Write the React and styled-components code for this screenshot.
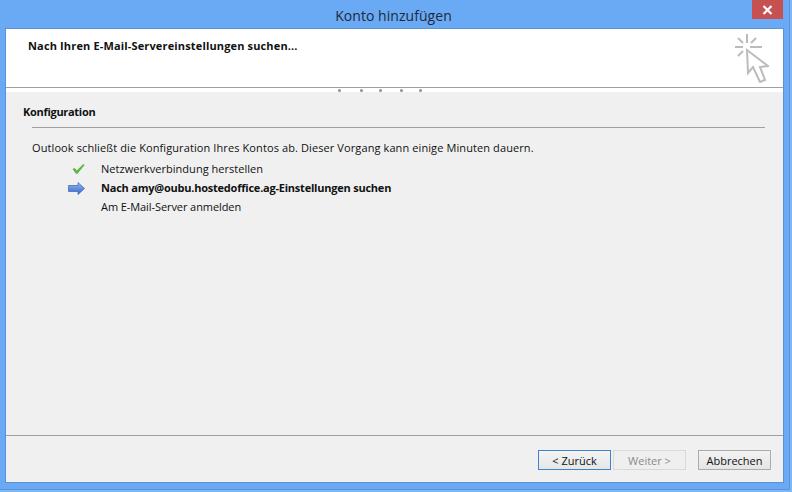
import React from 'react';
import styled, { createGlobalStyle } from 'styled-components';

const FONT = `"Open Sans", "Noto Sans", "Liberation Sans", sans-serif`;

const GlobalStyle = createGlobalStyle`
  html, body {
    margin: 0;
    padding: 0;
    background: #6aa9f4;
  }
  * {
    box-sizing: border-box;
  }
`;

const DOTS = [338, 360, 379, 400, 419];

export default function App() {
  return (
    <Screen>
      <GlobalStyle />
      <WindowFrame>
        <TitleBar>
          <Title>Konto hinzufügen</Title>
          <CloseButton>
            <svg width="11" height="10" viewBox="0 0 11 10">
              <path d="M1.5 1 L9.5 9 M9.5 1 L1.5 9" stroke="#fff" strokeWidth="2.2" fill="none" />
            </svg>
          </CloseButton>
        </TitleBar>

        <Panel>
          <Header>
            <HeaderTitle>Nach Ihren E-Mail-Servereinstellungen suchen...</HeaderTitle>
            <CursorIcon />
          </Header>

          <HeaderRule>
            {DOTS.map((x) => (
              <Dot key={x} style={{ left: x - 6 }} />
            ))}
          </HeaderRule>

          <Body>
            <SectionTitle>Konfiguration</SectionTitle>
            <SectionRule />
            <Intro>Outlook schließt die Konfiguration Ihres Kontos ab. Dieser Vorgang kann einige Minuten dauern.</Intro>

            <StepList>
              <Step>
                <StepIcon><CheckIcon /></StepIcon>
                <StepLabel $spacing="0.03px">Netzwerkverbindung herstellen</StepLabel>
              </Step>
              <Step>
                <StepIcon><ArrowIcon /></StepIcon>
                <StepLabel $active $spacing="-0.22px">Nach amy@oubu.hostedoffice.ag-Einstellungen suchen</StepLabel>
              </Step>
              <Step>
                <StepIcon />
                <StepLabel $spacing="-0.08px">Am E-Mail-Server anmelden</StepLabel>
              </Step>
            </StepList>
          </Body>

          <Footer>
            <Button $focused>&lt; Zurück</Button>
            <Button $disabled>Weiter &gt;</Button>
            <CancelButton>Abbrechen</CancelButton>
          </Footer>
        </Panel>
      </WindowFrame>
    </Screen>
  );
}

function CursorIcon() {
  return (
    <CursorSvg width="36" height="50" viewBox="0 0 36 50" fill="none">
      <g stroke="#bcbcbc" strokeWidth="2">
        <path d="M14 1 V10 M2 14 H10 M17 14 H29" />
        <path d="M5 5 L10 10 M23 5 L18 10 M5 23 L10 18" />
      </g>
      <path
        d="M14 17 L15 40 L20 34 L27 49 L32 47 L27 34 L35 33 Z"
        fill="#fff"
        stroke="#bcbcbc"
        strokeWidth="2"
      />
    </CursorSvg>
  );
}

function CheckIcon() {
  return (
    <svg width="13" height="10" viewBox="0 0 13 10">
      <path d="M0.5 5 L2.8 4 L4.8 6.5 L11 0.3 L12.8 0.8 L5.5 9.8 L4 9.8 Z" fill="#5cb544" />
    </svg>
  );
}

function ArrowIcon() {
  return (
    <svg width="17" height="13" viewBox="0 0 17 13">
      <defs>
        <linearGradient id="arrowFill" x1="0" y1="0" x2="0" y2="1">
          <stop offset="0" stopColor="#9dbcf0" />
          <stop offset="1" stopColor="#2f62c4" />
        </linearGradient>
      </defs>
      <path d="M0.5 3.5 H10 V0.5 L16.5 6.5 L10 12.5 V9.5 H0.5 Z" fill="url(#arrowFill)" stroke="#3f6fc4" strokeWidth="0.8" />
    </svg>
  );
}

const Screen = styled.div`
  width: 792px;
  height: 492px;
  background: #7db8f5;
  overflow: hidden;
  font-family: ${FONT};
`;

const WindowFrame = styled.div`
  width: 790px;
  height: 490px;
  background: #6aa9f4;
  border-right: 1px solid #5a93d8;
  border-bottom: 1px solid #5a93d8;
  display: flex;
  flex-direction: column;
`;

const TitleBar = styled.div`
  height: 29px;
  flex-shrink: 0;
  display: flex;
  align-items: center;
  justify-content: center;
  position: relative;
  padding-top: 1px;
`;

const Title = styled.div`
  font-size: 14px;
  color: #1c2a3c;
  margin-left: -2px;
  letter-spacing: 0.05px;
`;

const CloseButton = styled.div`
  position: absolute;
  top: 0;
  right: 6px;
  width: 31px;
  height: 19px;
  background: #c75050;
  display: flex;
  align-items: center;
  justify-content: center;
`;

const Panel = styled.div`
  width: 777px;
  height: 453px;
  margin-left: 6px;
  background: #f0f0f0;
  box-shadow: 0 0 0 1px #5a93d0;
  display: flex;
  flex-direction: column;
`;

const Header = styled.div`
  height: 58px;
  flex-shrink: 0;
  background: #fff;
  display: flex;
  justify-content: space-between;
  align-items: flex-start;
  padding: 9px 14px 0 22px;
`;

const HeaderTitle = styled.div`
  font-size: 11px;
  font-weight: 700;
  color: #111;
  line-height: 15px;
  letter-spacing: 0.15px;
`;

const CursorSvg = styled.svg`
  margin-top: -5px;
`;

const HeaderRule = styled.div`
  height: 5px;
  flex-shrink: 0;
  background: #fff;
  border-top: 1px solid #a0a0a0;
  position: relative;
`;

const Dot = styled.span`
  position: absolute;
  top: 1px;
  width: 3px;
  height: 3px;
  border-radius: 50%;
  background: #8f8f8f;
`;

const Body = styled.div`
  flex: 1;
  padding: 12px 18px 0 17px;
  display: flex;
  flex-direction: column;
`;

const SectionTitle = styled.div`
  font-size: 11px;
  font-weight: 700;
  color: #111;
  line-height: 16px;
  letter-spacing: -0.3px;
`;

const SectionRule = styled.div`
  height: 1px;
  background: #a0a0a0;
  margin: 7px 0 0 9px;
`;

const Intro = styled.div`
  font-size: 11px;
  color: #111;
  line-height: 16px;
  margin: 12px 0 0 9px;
  white-space: nowrap;
  letter-spacing: 0.1px;
`;

const StepList = styled.div`
  display: flex;
  flex-direction: column;
  margin: 5px 0 0 9px;
  row-gap: 3px;
`;

const Step = styled.div`
  display: flex;
  align-items: center;
  height: 16px;
`;

const StepIcon = styled.div`
  width: 53px;
  margin-right: 16px;
  display: flex;
  align-items: center;
  justify-content: flex-end;
`;

const StepLabel = styled.div`
  font-size: 11px;
  font-weight: ${(props) => (props.$active ? 700 : 400)};
  letter-spacing: ${(props) => props.$spacing};
  color: #111;
  line-height: 16px;
  white-space: nowrap;
`;

const Footer = styled.div`
  height: 47px;
  flex-shrink: 0;
  border-top: 1px solid #a0a0a0;
  display: flex;
  align-items: flex-start;
  padding: 14px 0 0 532px;
  column-gap: 2px;
`;

const Button = styled.div`
  width: 73px;
  height: 20px;
  display: flex;
  align-items: center;
  justify-content: center;
  font-size: 11px;
  background: ${(props) => (props.$focused ? 'linear-gradient(#f4f4f4, #e6e6e6)' : props.$disabled ? '#efefef' : 'linear-gradient(#f2f2f2, #e5e5e5)')};
  color: ${(props) => (props.$disabled ? '#8a8a8a' : '#111')};
  border: 1px solid ${(props) => (props.$focused ? '#3c85cc' : props.$disabled ? '#d9d9d9' : '#acacac')};
`;

const CancelButton = styled(Button)`
  margin-left: 10px;
`;
